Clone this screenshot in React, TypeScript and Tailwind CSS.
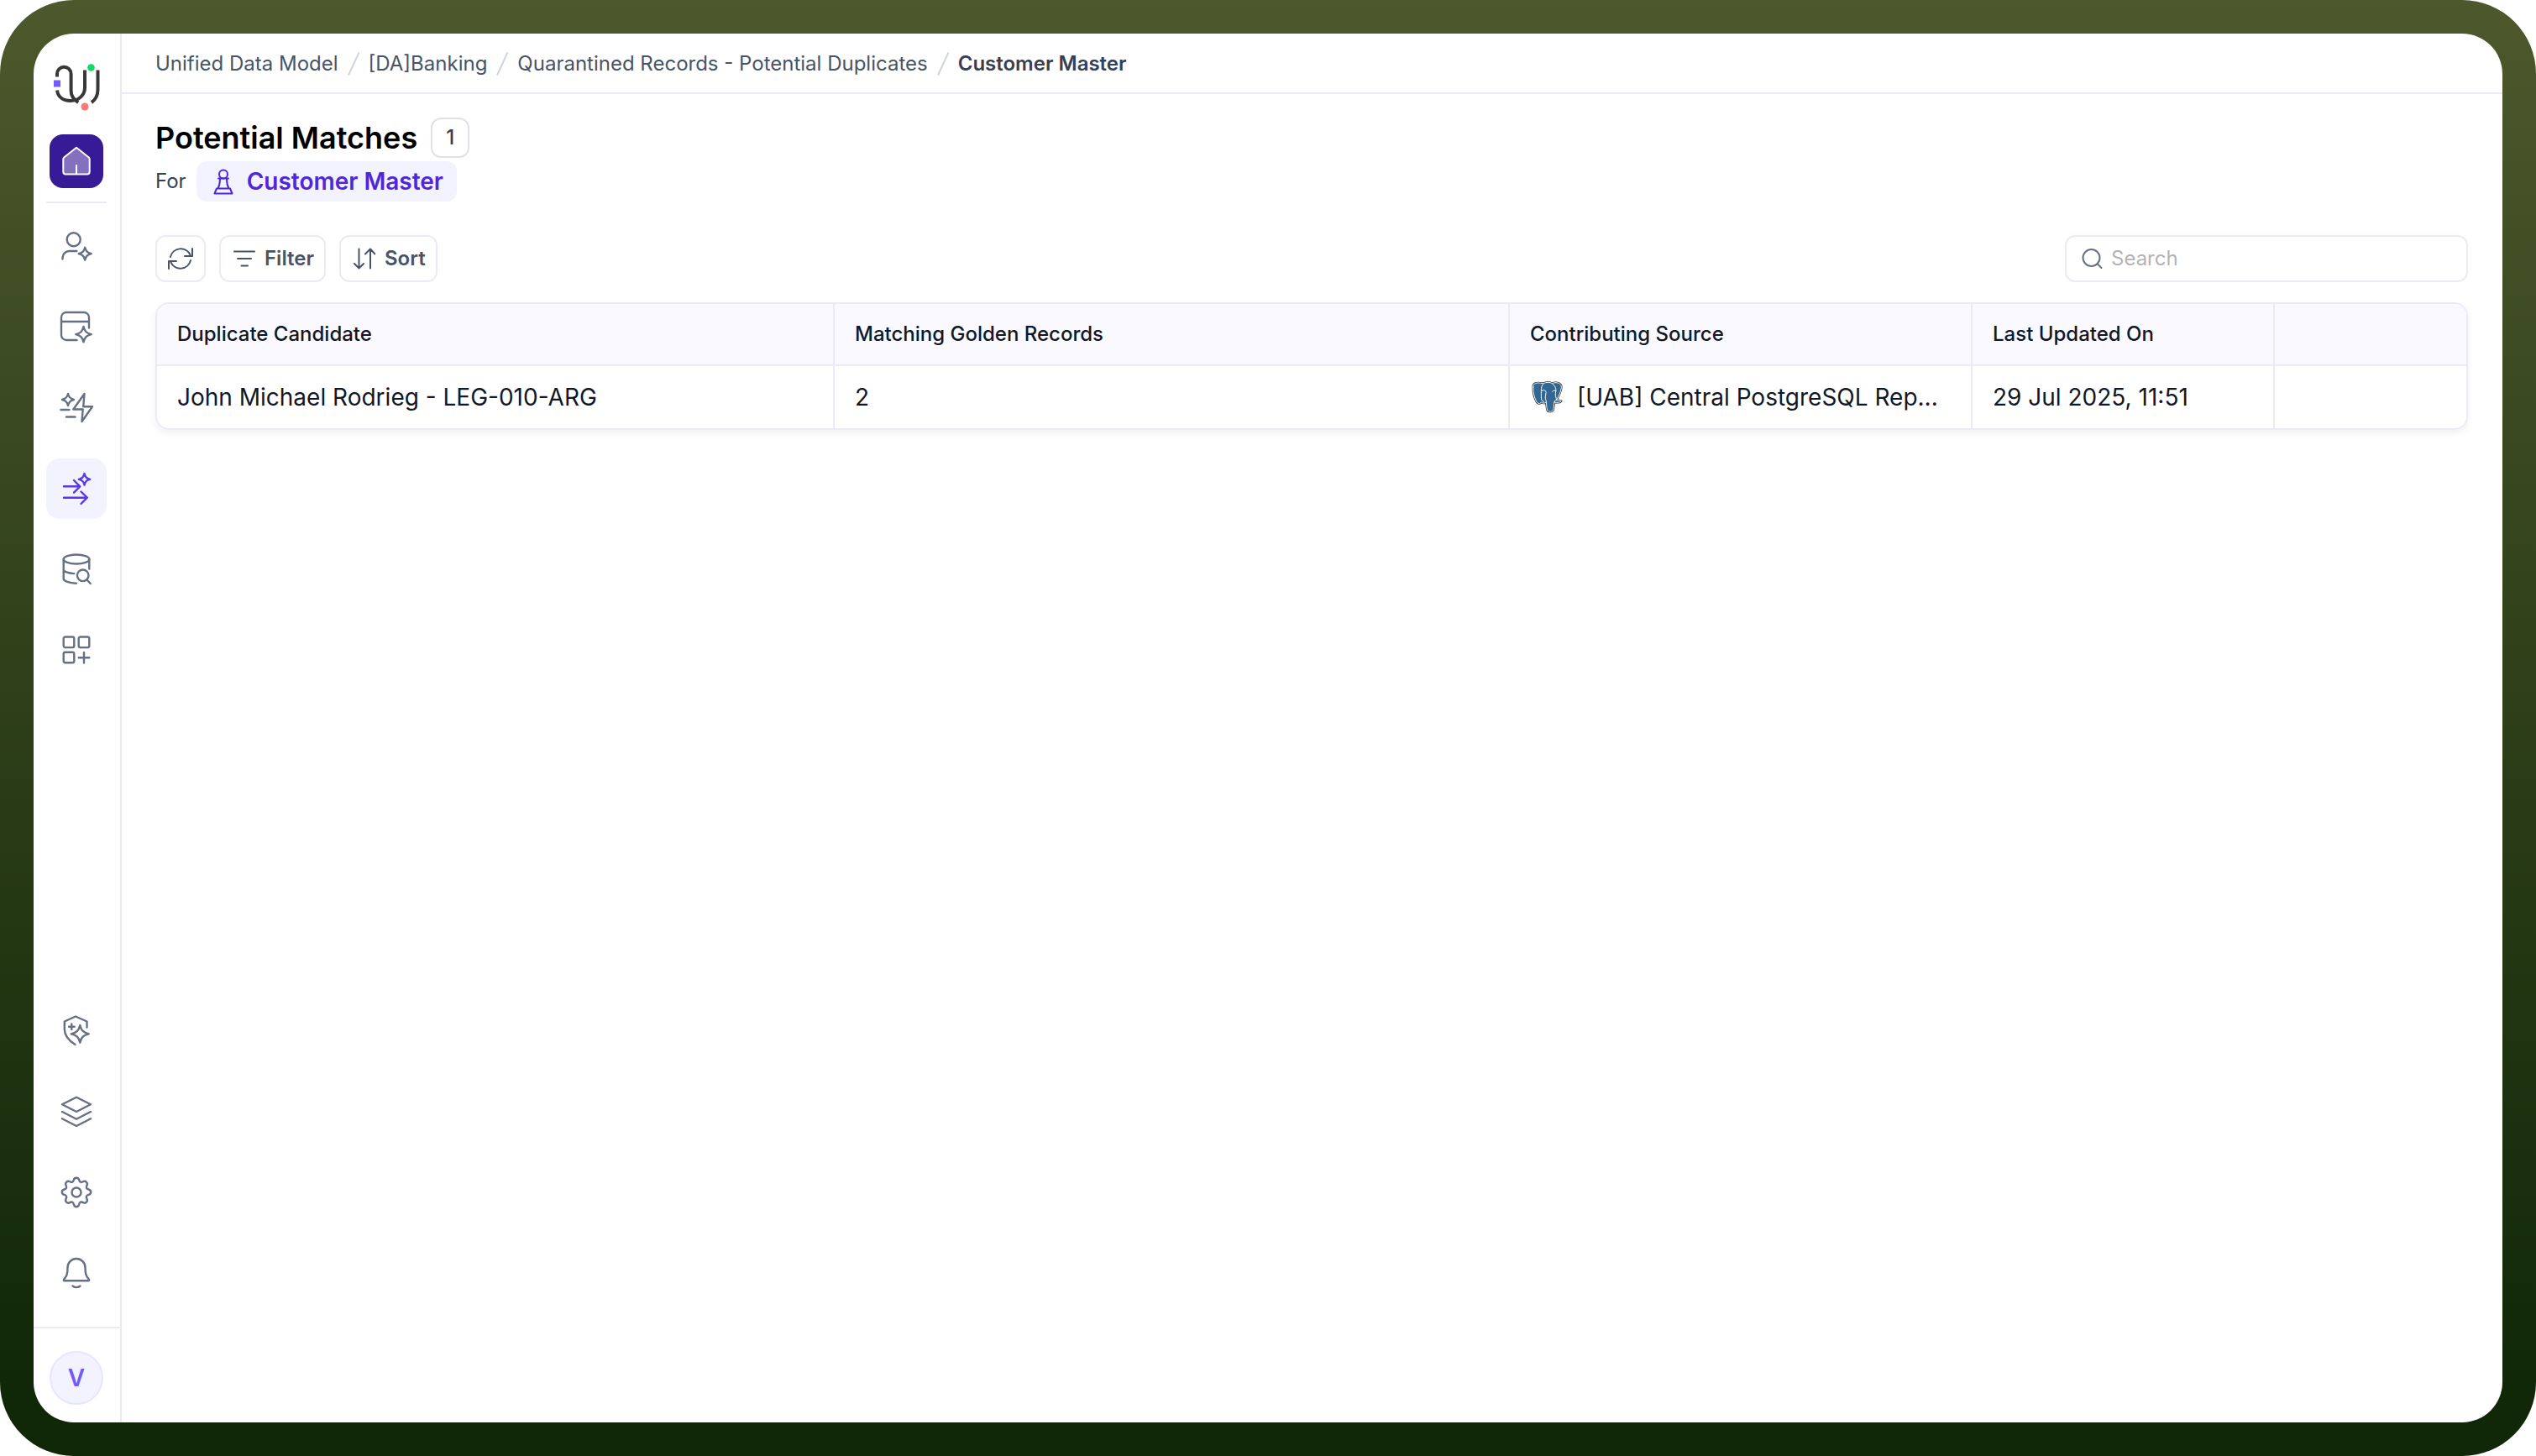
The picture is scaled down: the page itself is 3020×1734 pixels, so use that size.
import type { ReactNode } from 'react';

interface IconProps {
  children: ReactNode;
  className?: string;
}

const Icon = ({ children, className = 'size-10' }: IconProps) => (
  <svg
    viewBox="0 0 40 40"
    fill="none"
    stroke="currentColor"
    strokeWidth="2.4"
    strokeLinecap="round"
    strokeLinejoin="round"
    className={className}
  >
    {children}
  </svg>
);

const topItems = [
  {
    name: 'profiles',
    icon: (
      <>
        <circle cx="16.7" cy="11.3" r="8" />
        <path d="M3.5 34.5v-1.5a8 8 0 0 1 8-8h8.8" />
        <path d="M30.2 20.8c1.2 4.6 2.6 6 7.5 7.4-4.9 1.3-6.3 2.8-7.5 7.4-1.2-4.6-2.6-6.1-7.5-7.4 4.9-1.4 6.3-2.8 7.5-7.4z" />
      </>
    ),
  },
  {
    name: 'models',
    icon: (
      <>
        <path d="M20.5 35H8a6 6 0 0 1-6-6V8a6 6 0 0 1 6-6h21a6 6 0 0 1 6 6v12.5M2 13h33" />
        <path d="M28.5 19c1.5 5.9 3.3 7.7 9.2 9.2-5.9 1.5-7.7 3.3-9.2 9.2-1.5-5.9-3.3-7.7-9.2-9.2 5.9-1.5 7.7-3.3 9.2-9.2z" />
      </>
    ),
  },
  {
    name: 'actions',
    icon: (
      <>
        <path d="M29.5 3 16.3 21.5h11.4L26.5 36 39 18.3H28.2z" />
        <path d="M10 3c1 4.3 2.500 5.900 7 7-4.500 1.100-6 2.700-7 7-1-4.300-2.500-5.900-7-7 4.500-1.100 6-2.700 7-7z" />
        <path d="M1.5 22h10M8 30.5h10.5" />
      </>
    ),
  },
  {
    name: 'matches',
    active: true,
    icon: (
      <>
        <path d="M5 17.3h19M17 10l7.3 7.3-7.3 7.3M5 30.7h27.7M25.5 23.5l7.3 7.2-7.3 7.3" />
        <path d="M29.5 2c1.1 4.3 2.5 5.7 6.7 6.8-4.2 1.1-5.6 2.5-6.7 6.8-1.1-4.3-2.5-5.7-6.7-6.8 4.2-1.1 5.6-2.5 6.7-6.8z" />
      </>
    ),
  },
  {
    name: 'data search',
    icon: (
      <>
        <ellipse cx="20" cy="8" rx="15.3" ry="5.5" />
        <path d="M4.7 8v23.5c0 2.5 6.5 4.8 15.2 5.3M35.3 8v11.5M4.7 20.5c0 2 5 4.2 12.6 4.6" />
        <circle cx="27.7" cy="27.3" r="6.8" />
        <path d="m32.5 32.5 4.2 4.5" />
      </>
    ),
  },
  {
    name: 'apps',
    icon: (
      <>
        <rect x="4.7" y="4.5" width="12.6" height="12.6" rx="2" />
        <rect x="22.7" y="4.5" width="12.6" height="12.6" rx="2" />
        <rect x="4.7" y="22.7" width="12.6" height="12.6" rx="2" />
        <path d="M29 23v12.5M22.7 29.2h12.6" />
      </>
    ),
  },
];

const bottomItems = [
  {
    name: 'security',
    icon: (
      <>
        <path d="M18.5 36C10.5 31 5.8 25.5 5.8 17.5V8.5L19 2.5l13.5 6v7" />
        <path d="M24.3 13c1.5 6.2 4 8.8 10.5 10.3-6.5 1.5-9 4.1-10.5 10.3-1.5-6.2-4-8.8-10.5-10.3 6.5-1.5 9-4.1 10.5-10.3z" />
        <path d="M14.3 11.5v6.5M11.1 14.7h6.5" />
      </>
    ),
  },
  {
    name: 'layers',
    icon: (
      <path d="M20 2.7 37 11.3 20 20 3 11.3zM3 20l17 8.7L37 20M3 28.3 20 37l17-8.7" />
    ),
  },
  {
    name: 'settings',
    icon: (
      <>
        <circle cx="20" cy="20" r="5.5" />
        <path d="M16.8 5.3C17.3 3.4 18.2 2.8 20 2.8s2.7.6 3.2 2.5c.6 2.6 2.5 3.3 4.7 2 1.7-1 2.8-.8 4 .5 1.3 1.2 1.5 2.3.5 4-1.3 2.2-.6 4.1 2 4.7 1.9.5 2.800 1.400 2.800 3.200s-.9 2.700-2.800 3.200c-2.600.6-3.300 2.500-2 4.700 1 1.700.8 2.800-.5 4-1.200 1.300-2.300 1.500-4 .5-2.200-1.300-4.100-.6-4.700 2-.5 1.900-1.400 3.100-3.200 3.100s-2.700-1.200-3.200-3.100c-.6-2.600-2.500-3.300-4.700-2-1.700 1-2.800.8-4-.5-1.300-1.200-1.500-2.300-.5-4 1.300-2.200.6-4.100-2-4.700-1.900-.5-2.800-1.400-2.800-3.200s.9-2.700 2.800-3.200c2.600-.6 3.300-2.500 2-4.700-1-1.700-.8-2.800.5-4 1.200-1.300 2.300-1.500 4-.5 2.200 1.300 4.100.6 4.700-2z" />
      </>
    ),
  },
  {
    name: 'notifications',
    icon: (
      <>
        <path d="M9.5 13.5a10.5 10.5 0 0 1 21 0c0 8 1.2 10.5 4.2 14 .8 1 .4 1.8-.7 1.8H6c-1.1 0-1.5-.8-.7-1.8 3-3.5 4.2-6 4.2-14z" />
        <path d="M15.5 35.5c2.5 2.2 6.5 2.2 9 0" />
      </>
    ),
  },
];

const columns = [
  { title: 'Duplicate Candidate', width: 'w-[807px]' },
  { title: 'Matching Golden Records', width: 'w-[804px]' },
  { title: 'Contributing Source', width: 'w-[551px]' },
  { title: 'Last Updated On', width: 'w-[360px]' },
  { title: '', width: 'flex-1' },
];

const crumbs = ['Unified Data Model', '[DA]Banking', 'Quarantined Records - Potential Duplicates'];

const elephantShape =
  'M47 45C46 30 60 27 82 32 95 27 105 27 115 31 135 25 150 33 148 47 146 65 138 78 131 90 138 92 146 92 148 95 143 101 132 101 123 99 121 110 122 120 118 128 113 135 100 134 97 126 95 115 95 108 94 100 88 104 80 103 76 99 72 105 66 106 60 99 52 85 47 65 47 45z';

const PostgresLogo = () => (
  <svg viewBox="36 21 120 120" fill="none" strokeLinejoin="round" strokeLinecap="round" className="size-10 shrink-0">
    <path d={elephantShape} stroke="#1a1a1a" strokeWidth="7" />
    <path d={elephantShape} fill="#336791" stroke="white" strokeWidth="3" />
    <g stroke="white" strokeWidth="3">
      <path d="M83 34C73 44 77 65 76 80c0 10 3 16 9 17" />
      <path d="M79 58c9-5 14-1 14 7 0 11-5 17-1 24 2 4 2 8 2 11" />
      <path d="M116 33c12 9 15 22 11 34-1 9 2 16 4 23" />
      <path d="M116 61c3-5 9-5 12-2M123 99c0-5 3-8 8-9" />
    </g>
  </svg>
);

const Logo = () => (
  <svg viewBox="0 0 60 60" fill="none" className="h-[60px] w-[60px]">
    <g stroke="#383838" strokeWidth="4">
      <path d="M7 18.5v-3.5a8 8 0 0 1 16.6 0v20c0 6 3 10.5 8.6 14" />
      <path d="M40 10.5v21c0 9-7.500 15.500-17 15.500S8 42 7 34.500" />
      <path d="M55.5 10.5v23c0 7-2.500 12-7.500 15.500" />
    </g>
    <rect x="3" y="22.5" width="8" height="8" fill="#735cff" />
    <circle cx="47.5" cy="7.5" r="4.3" fill="#0fdb5f" />
    <circle cx="40" cy="54" r="4.5" fill="#ff7676" />
  </svg>
);

const Sidebar = () => (
  <aside className="flex w-[105px] shrink-0 flex-col border-r-2 border-[#ecebf5]">
    <div className="flex h-[120px] items-center justify-center pt-[6px] pr-0.5">
      <Logo />
    </div>
    <div className="flex flex-col items-center pr-px">
      <button className="flex size-16 items-center justify-center rounded-2xl bg-[#371a95] text-white">
        <Icon>
          <path
            d="M4.300 17.500c0-.8.300-1.500.9-2L20 3.800l14.800 11.700c.6.500.9 1.200.9 2V32.500a3 3 0 0 1-3 3H7.300a3 3 0 0 1-3-3z"
            fill="#8370bf"
            strokeWidth="2"
          />
          <path d="M20 25v10" strokeWidth="2" />
        </Icon>
      </button>
      <div className="mt-4 h-0.5 w-[72px] bg-[#ecebf5]" />
    </div>
    <nav className="mt-4 flex flex-col items-center gap-6 pr-px">
      {topItems.map(item => (
        <button
          key={item.name}
          className={`flex size-[72px] items-center justify-center rounded-2xl ${
            item.active ? 'bg-[#f3f2ff] text-[#5b37eb]' : 'text-[#667085]'
          }`}
        >
          <Icon>{item.icon}</Icon>
        </button>
      ))}
    </nav>
    <nav className="mt-auto flex flex-col items-center gap-6 pr-px pb-7">
      {bottomItems.map(item => (
        <button key={item.name} className="flex size-[72px] items-center justify-center text-[#667085]">
          <Icon>{item.icon}</Icon>
        </button>
      ))}
    </nav>
    <div className="flex h-[114px] items-center justify-center border-t-2 border-[#ecebf5] pt-[6px] pr-px">
      <div className="flex size-16 items-center justify-center rounded-full border-2 border-[#e8e5ff] bg-[#f3f2ff] text-[28px] font-semibold text-[#735cf5]">
        V
      </div>
    </div>
  </aside>
);

const Breadcrumbs = () => (
  <header className="flex h-[72px] items-center border-b-2 border-[#ecebf5] pt-0.5 pl-10 text-2xl text-[#475467]">
    {crumbs.map(crumb => (
      <div key={crumb} className="flex items-center">
        <span>{crumb}</span>
        <svg viewBox="0 0 36 28" fill="none" stroke="#d0d5dd" strokeWidth="2" className="h-7 w-9">
          <path d="M12 27.5 24.5 0.500" />
        </svg>
      </div>
    ))}
    <span className="font-semibold text-[#344054]">Customer Master</span>
  </header>
);

const Toolbar = () => {
  const buttonClass =
    'flex h-14 items-center rounded-xl border-2 border-[#ecebf5] text-2xl font-semibold text-[#475467]';

  return (
    <div className="mt-10 flex items-center gap-4">
      <button className={`${buttonClass} w-[60px] justify-center`}>
        <svg viewBox="0 0 32 32" fill="none" stroke="currentColor" strokeWidth="2" strokeLinecap="round" strokeLinejoin="round" className="size-8">
          <path d="M4 14A12.5 12.5 0 0 1 27.5 11.5M30 4v9h-9M28 18A12.5 12.5 0 0 1 4.5 20.5M2 28v-9h9" />
        </svg>
      </button>
      <button className={`${buttonClass} w-[127px] gap-[11px] pl-[15px]`}>
        <svg viewBox="0 0 26 26" fill="none" stroke="currentColor" strokeWidth="2" strokeLinecap="round" className="size-[26px]">
          <path d="M1 4.500h24M5 13h16M9.500 21.500h7.500" />
        </svg>
        Filter
      </button>
      <button className={`${buttonClass} w-[117px] gap-[11px] pl-[15px]`}>
        <svg viewBox="0 0 26 26" fill="none" stroke="currentColor" strokeWidth="2" strokeLinecap="round" strokeLinejoin="round" className="size-[26px]">
          <path d="M6.5 1.500v23M1 19l5.500 5.500L12 19M20 24.500v-23M14 7.500l6-6 5.500 6" />
        </svg>
        Sort
      </button>
      <div className="ml-auto flex h-14 w-[480px] items-center gap-[9px] rounded-xl border-2 border-[#ecebf5] pl-[18px]">
        <svg viewBox="0 0 26 26" fill="none" stroke="#667085" strokeWidth="2" strokeLinecap="round" className="size-[26px] shrink-0">
          <circle cx="11.5" cy="12" r="10" />
          <path d="m19 19.5 4.5 4.5" />
        </svg>
        <input placeholder="Search" className="w-full text-2xl outline-none placeholder:text-[#b3b3b3]" />
      </div>
    </div>
  );
};

const MatchesTable = () => {
  const cells = [
    'John Michael Rodrieg - LEG-010-ARG',
    '2',
    <div className="flex items-center gap-4">
      <PostgresLogo />
      <span className="whitespace-nowrap">[UAB] Central PostgreSQL Rep...</span>
    </div>,
    '29 Jul 2025, 11:51',
    '',
  ];

  return (
    <div className="mt-6 overflow-hidden rounded-2xl border-2 border-[#ecebf5] text-[#101828] shadow-[0_4px_8px_rgba(16,24,40,0.06)]">
      <div className="flex h-[74px] border-b-2 border-[#ecebf5] bg-[#faf9ff] text-2xl font-medium">
        {columns.map(column => (
          <div
            key={column.title}
            className={`${column.width} flex items-center border-r-2 border-[#ecebf5] pl-6 last:border-r-0`}
          >
            {column.title}
          </div>
        ))}
      </div>
      <div className="flex h-[74px] text-[28px]">
        {columns.map((column, index) => (
          <div
            key={column.title}
            className={`${column.width} flex items-center border-r-2 border-[#ecebf5] pl-6 last:border-r-0`}
          >
            {cells[index]}
          </div>
        ))}
      </div>
    </div>
  );
};

const App = () => {
  return (
    <div className="h-[1734px] w-[3020px] bg-white font-['Inter',sans-serif]">
      <div className="h-full rounded-[88px] bg-linear-to-b from-[#4d582c] to-[#102808] to-95% p-10">
        <div className="flex h-full overflow-hidden rounded-[48px] bg-white">
          <Sidebar />
          <main className="flex min-w-0 flex-1 flex-col">
            <Breadcrumbs />
            <section className="pt-7 pr-[41px] pl-10">
              <div className="flex h-12 items-center gap-4">
                <h1 className="text-4xl font-semibold text-black">Potential Matches</h1>
                <span className="flex h-12 w-[46px] items-center justify-center rounded-xl border-2 border-[#e0e0ec] text-2xl font-medium text-[#344054]">
                  1
                </span>
              </div>
              <div className="mt-1 flex h-12 items-center text-2xl text-[#344054]">
                For
                <div className="ml-3 flex h-12 w-[310px] items-center rounded-xl bg-[#f3f2ff] pt-px pl-4 text-[28px] font-semibold text-[#4f26d9]">
                  <svg viewBox="0 0 32 32" fill="none" stroke="currentColor" strokeWidth="2" strokeLinejoin="round" strokeLinecap="round" className="mr-3 size-8">
                    <circle cx="16" cy="6.5" r="5" />
                    <path d="M10 11.500h12M12 12c0 4.500-.6 8-2.500 11.500M20 12c0 4.500.6 8 2.500 11.500M8 23.500h16L26.500 29.500h-21z" />
                  </svg>
                  Customer Master
                </div>
              </div>
              <Toolbar />
              <MatchesTable />
            </section>
          </main>
        </div>
      </div>
    </div>
  );
};

export default App;
